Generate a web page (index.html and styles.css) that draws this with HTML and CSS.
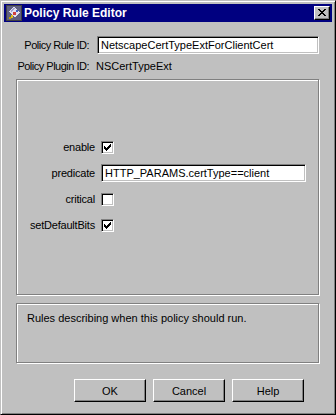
FILE: index.html
```html
<!DOCTYPE html>
<html lang="en">
<head>
  <meta charset="UTF-8">
  <title>Policy Rule Editor</title>
  <link rel="stylesheet" href="styles.css">
</head>
<body>

  <div class="window">
    <div class="titlebar">
      <svg class="app-icon" width="16" height="16" viewBox="0 0 16 16" shape-rendering="crispEdges">
        <rect x="0" y="0" width="16" height="16" fill="#404040"/>
        <rect x="1" y="1" width="14" height="14" fill="#606080"/>
        <path d="M3 6 L8 2 L14 7 L9 13 Z" fill="#e0e0f0"/>
        <path d="M4 6 L8 3 L9 4 L5 7 Z" fill="#a0a0d0"/>
        <rect x="7" y="7" width="3" height="3" fill="#d04040"/>
        <rect x="5" y="10" width="2" height="3" fill="#e0c020"/>
        <rect x="10" y="5" width="2" height="2" fill="#4060c0"/>
        <rect x="3" y="12" width="2" height="2" fill="#c0a000"/>
      </svg>
      <span class="title">Policy Rule Editor</span>
      <div class="close-btn">
        <svg width="8" height="7" viewBox="0 0 8 7" shape-rendering="crispEdges">
          <path d="M0 0h2v1h-2z M6 0h2v1h-2z M1 1h2v1h-2z M5 1h2v1h-2z M2 2h4v1h-4z M3 3h2v1h-2z M2 4h4v1h-4z M1 5h2v1h-2z M5 5h2v1h-2z M0 6h2v1h-2z M6 6h2v1h-2z" fill="#000"/>
        </svg>
      </div>
    </div>

    <div class="content">
      <div class="field-row">
        <span class="field-label">Policy Rule ID:</span>
        <div class="textbox rule-id">NetscapeCertTypeExtForClientCert</div>
      </div>
      <div class="field-row info-row">
        <span class="field-label">Policy Plugin ID:</span>
        <span class="field-value">NSCertTypeExt</span>
      </div>

      <div class="group params">
        <div class="param-grid">
          <span class="param-label">enable</span>
          <div class="checkbox">
            <svg width="9" height="9" viewBox="0 0 9 9" shape-rendering="crispEdges"><path d="M7 1h1v1h-1z M6 2h2v1h-2z M1 3h1v1h-1z M5 3h3v1h-3z M1 4h2v1h-2z M4 4h3v1h-3z M1 5h5v1h-5z M2 6h3v1h-3z M3 7h1v1h-1z" fill="#000"/></svg>
          </div>

          <span class="param-label">predicate</span>
          <div class="textbox predicate">HTTP_PARAMS.certType==client</div>

          <span class="param-label">critical</span>
          <div class="checkbox"></div>

          <span class="param-label">setDefaultBits</span>
          <div class="checkbox">
            <svg width="9" height="9" viewBox="0 0 9 9" shape-rendering="crispEdges"><path d="M7 1h1v1h-1z M6 2h2v1h-2z M1 3h1v1h-1z M5 3h3v1h-3z M1 4h2v1h-2z M4 4h3v1h-3z M1 5h5v1h-5z M2 6h3v1h-3z M3 7h1v1h-1z" fill="#000"/></svg>
          </div>
        </div>
      </div>

      <div class="group description">Rules describing when this policy should run.</div>

      <div class="buttons">
        <button class="btn">OK</button>
        <button class="btn">Cancel</button>
        <button class="btn">Help</button>
      </div>
    </div>
  </div>

</body>
</html>
```

FILE: styles.css
```css
html, body {
  margin: 0;
  padding: 0;
  background: #c0c0c0;
  font-family: 'Liberation Sans', Arial, sans-serif;
  font-size: 11px;
  color: #000;
}

.window {
  box-sizing: border-box;
  width: 336px;
  height: 415px;
  padding: 3px;
  border: 1px solid;
  border-color: #c0c0c0 #000 #000 #c0c0c0;
  box-shadow: inset 1px 1px #fff, inset -1px -1px #808080;
  background: #c0c0c0;
  display: flex;
  flex-direction: column;
}

/* Title bar */
.titlebar {
  height: 18px;
  flex-shrink: 0;
  background: #000080;
  display: flex;
  align-items: center;
  gap: 2px;
  padding: 0 2px;
}

.app-icon {
  display: block;
  flex-shrink: 0;
}

.title {
  color: #fff;
  font-weight: bold;
  font-size: 12px;
  line-height: 18px;
  white-space: nowrap;
}

.close-btn {
  box-sizing: border-box;
  margin-left: auto;
  width: 16px;
  height: 14px;
  background: #c0c0c0;
  border: 1px solid;
  border-color: #fff #000 #000 #fff;
  box-shadow: inset -1px -1px #808080;
  display: flex;
  align-items: center;
  justify-content: center;
  padding: 0 1px 1px 0;
}

.close-btn svg {
  display: block;
}

/* Dialog content */
.content {
  flex: 1;
  padding: 14px 13px 0 12px;
  display: flex;
  flex-direction: column;
}

.field-row {
  display: flex;
  align-items: center;
  gap: 8px;
  height: 18px;
}

.info-row {
  margin-top: 4px;
  height: 16px;
  gap: 7px;
}

.field-label {
  width: 73px;
  flex-shrink: 0;
  text-align: right;
  white-space: nowrap;
  letter-spacing: -0.5px;
  line-height: 16px;
}

.field-value {
  line-height: 16px;
  white-space: nowrap;
}

.textbox {
  box-sizing: border-box;
  height: 18px;
  padding: 1px 3px 0;
  line-height: 15px;
  background: #fff;
  border: 1px solid;
  border-color: #808080 #fff #fff #808080;
  box-shadow: inset 1px 1px #000, inset -1px -1px #c0c0c0;
  white-space: nowrap;
  overflow: hidden;
}

.rule-id {
  flex: 1;
}

/* Etched group boxes */
.group {
  box-sizing: border-box;
  border: 1px solid #808080;
  box-shadow: inset 1px 1px #fff, 1px 1px #fff;
}

.params {
  margin-top: 5px;
  height: 216px;
  padding-top: 58px;
}

.param-grid {
  display: grid;
  grid-template-columns: 78px auto;
  column-gap: 6px;
  row-gap: 8px;
  grid-auto-rows: 18px;
  align-items: center;
  justify-items: start;
}

.param-label {
  justify-self: end;
  line-height: 18px;
  white-space: nowrap;
  letter-spacing: -0.2px;
}

.predicate {
  width: 205px;
}

.checkbox {
  box-sizing: border-box;
  width: 13px;
  height: 13px;
  padding: 1px;
  background: #fff;
  border: 1px solid;
  border-color: #808080 #fff #fff #808080;
  box-shadow: inset 1px 1px #000, inset -1px -1px #c0c0c0;
}

.checkbox svg {
  display: block;
}

.description {
  margin-top: 8px;
  height: 60px;
  padding: 8px 10px;
  line-height: 13px;
}

/* Buttons */
.buttons {
  margin-top: 16px;
  display: flex;
  justify-content: flex-end;
  gap: 7px;
  padding-right: 15px;
}

.btn {
  box-sizing: border-box;
  width: 72px;
  height: 23px;
  margin: 0;
  padding: 0;
  font-family: inherit;
  font-size: 11px;
  color: #000;
  background: #c0c0c0;
  border: 1px solid;
  border-color: #fff #000 #000 #fff;
  box-shadow: inset -1px -1px #808080;
  cursor: pointer;
}
```
